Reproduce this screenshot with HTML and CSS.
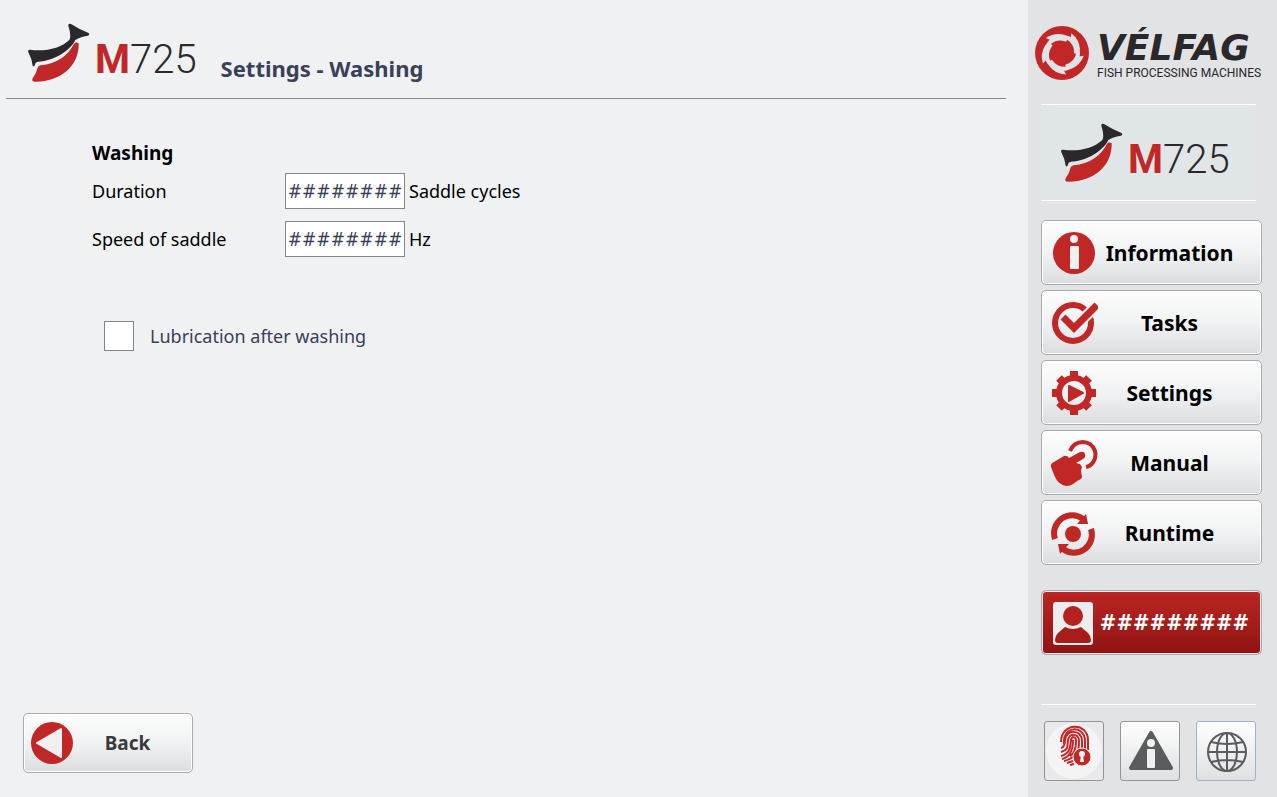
FILE: index.html
```html
<!DOCTYPE html>
<html lang="en">

<head>
    <meta charset="UTF-8">
    <meta name="viewport" content="width=device-width, initial-scale=1.0">
    <title>M725 - Settings - Washing</title>
    <link rel="stylesheet" href="styles.css">
</head>

<body>
    <main class="screen">
        <header class="header">
            <div class="brand">
                <svg class="fish" viewBox="84 70 186 180" aria-hidden="true">
                    <g id="fish">
                        <path fill="#2b282b" d="M205 78Q204 70 213 73Q236 88 264 99Q272 104 264 108Q238 112 226 121C207 160 150 186 114 186Q106 187 105 194Q103 204 98 198Q96 178 85 158Q82 150 90 150C135 157 182 146 208 121Q215 108 205 78Z"/>
                        <path fill="#c12726" d="M222 132Q228 125 236 131C238 200 180 248 102 246Q94 244 98 236Q110 220 112 206Q114 198 122 197C170 192 204 168 222 132Z"/>
                    </g>
                </svg>
                <span class="model"><b>M</b>725</span>
            </div>
            <h1 class="title">Settings - Washing</h1>
        </header>

        <form class="settings">
            <h2 class="group">Washing</h2>
            <div class="row">
                <label for="duration">Duration</label>
                <input id="duration" class="value" type="text" value="########">
                <span>Saddle cycles</span>
            </div>
            <div class="row">
                <label for="speed">Speed of saddle</label>
                <input id="speed" class="value" type="text" value="########">
                <span>Hz</span>
            </div>
            <div class="option">
                <input id="lubrication" class="check" type="checkbox">
                <label for="lubrication">Lubrication after washing</label>
            </div>
        </form>

        <button class="btn back" type="button">
            <svg viewBox="0 0 42 42" aria-hidden="true">
                <circle cx="21" cy="21" r="21" fill="#c12726"/>
                <path fill="#f0f0f1" stroke="#f0f0f1" stroke-width="2" stroke-linejoin="round" d="M6 21L30 7V35Z"/>
            </svg>
            <span>Back</span>
        </button>
    </main>

    <aside class="sidebar">
        <div class="company">
            <svg viewBox="-27 -27 54 54" aria-hidden="true">
                <circle r="27" fill="#c12726"/>
                <circle r="18" fill="#e2e3e5"/>
                <circle r="12" fill="#c12726"/>
                <g id="tooth">
                    <path fill="#e2e3e5" d="M-16 -15A22 22 0 0 1 3 -18L-10 -12Z"/>
                    <path fill="#c12726" d="M-11 -9A15 15 0 0 1 2 -12L-8 -6Z"/>
                </g>
                <use href="#tooth" transform="rotate(72)"/>
                <use href="#tooth" transform="rotate(144)"/>
                <use href="#tooth" transform="rotate(216)"/>
                <use href="#tooth" transform="rotate(288)"/>
            </svg>
            <div class="company-name">
                <strong>VÉLFAG</strong>
                <small>FISH PROCESSING MACHINES</small>
            </div>
        </div>

        <div class="brand machine">
            <svg class="fish" viewBox="84 70 186 180" aria-hidden="true"><use href="#fish"/></svg>
            <span class="model"><b>M</b>725</span>
        </div>

        <nav class="menu">
            <button class="btn" type="button">
                <svg viewBox="0 0 48 48" aria-hidden="true">
                    <circle cx="24" cy="24" r="21" fill="#c12726"/>
                    <circle cx="24" cy="10" r="4" fill="#f3f3f4"/>
                    <rect x="20" y="17" width="9" height="23" rx="1" fill="#f0f0f1"/>
                </svg>
                <span>Information</span>
            </button>
            <button class="btn" type="button">
                <svg viewBox="0 0 48 48" fill="none" stroke="#c12726" aria-hidden="true">
                    <circle cx="23" cy="24" r="18" stroke-width="6"/>
                    <path stroke="#f5f5f5" stroke-width="11" d="M26 27L48 5"/>
                    <path stroke-width="7" d="M13 18L24 29L47 6"/>
                </svg>
                <span>Tasks</span>
            </button>
            <button class="btn" type="button">
                <svg viewBox="0 0 48 48" fill="none" stroke="#c12726" aria-hidden="true">
                    <circle cx="24" cy="24" r="15" stroke-width="6"/>
                    <path stroke-width="8" d="M24 2V9M24 39V46M2 24H9M39 24H46M9 9L14 14M34 34L39 39M39 9L34 14M9 39L14 34"/>
                    <path fill="#c12726" stroke-width="2" stroke-linejoin="round" d="M19 17V32L33 24Z"/>
                </svg>
                <span>Settings</span>
            </button>
            <button class="btn" type="button">
                <svg viewBox="0 0 48 48" aria-hidden="true">
                    <path fill="none" stroke="#c12726" stroke-width="4" d="M20 12C25 0 41 0 45 12C47 20 42 27 36 28"/>
                    <path fill="#c12726" d="M1 28Q0 25 4 23L14 17Q17 16 19 19L30 13Q34 12 35 15Q36 18 33 20L26 24L30 25L32 28L31 32L32 38Q32 40 27 42Q22 47 16 47Q9 46 5 38Z"/>
                </svg>
                <span>Manual</span>
            </button>
            <button class="btn" type="button">
                <svg viewBox="0 0 48 48" aria-hidden="true">
                    <circle cx="23" cy="25" r="8" fill="#c12726"/>
                    <g id="arc">
                        <path fill="none" stroke="#c12726" stroke-width="6" d="M5 30A18 18 0 0 1 33 10"/>
                        <path fill="#c12726" d="M36 5L38 15L27 15Z"/>
                    </g>
                    <use href="#arc" transform="rotate(180 23 25)"/>
                </svg>
                <span>Runtime</span>
            </button>
            <button class="btn user" type="button">
                <svg viewBox="0 0 48 48" aria-hidden="true">
                    <rect x="3" y="3" width="40" height="43" rx="3" fill="#ededed"/>
                    <circle cx="23" cy="17" r="10" fill="#b5211f"/>
                    <path fill="#a81c19" d="M15 28Q23 32 31 28L38 34Q41 37 41 41Q41 44 38 44H8Q5 44 5 41Q5 37 8 34Z"/>
                </svg>
                <span>#########</span>
            </button>
        </nav>

        <div class="tools">
            <button class="tool login" type="button" aria-label="Login">
                <svg viewBox="0 0 58 58" fill="none" stroke="#c12726" stroke-width="2" aria-hidden="true">
                    <circle cx="29" cy="29" r="28" fill="#f4f4f5" stroke="none"/>
                    <path d="M16 20C16 0 43 0 43 18V28M19 22C17 3 40 3 40 19V27M16 26Q20 25 20 18C21 7 37 7 37 19V27M16 30C24 28 22 24 23 18C24 11 34 11 34 19Q34 25 33 30M16 34C26 31 25 24 26 18C27 14 31 14 31 19C31 27 29 32 25 34M17 37C25 35 28 29 28 18M19 39Q24 38 28 35M22 41L28 39M25 43L29 42"/>
                    <circle cx="37" cy="35" r="9" fill="#c12726" stroke="#f4f4f4" stroke-width="1"/>
                    <circle cx="37" cy="32" r="3" fill="#f4f4f4" stroke="none"/>
                    <path fill="#f4f4f4" stroke="none" d="M36 33H38L39 40H35Z"/>
                </svg>
            </button>
            <button class="tool" type="button" aria-label="Alarms">
                <svg viewBox="0 0 58 58" aria-hidden="true">
                    <path fill="#5b5c5e" stroke="#5b5c5e" stroke-width="4" stroke-linejoin="round" d="M30 11L50 46H10Z"/>
                    <circle cx="30" cy="21" r="4" fill="#f0f0f1"/>
                    <rect x="26" y="27" width="8" height="19" rx="1" fill="#f0f0f1"/>
                </svg>
            </button>
            <button class="tool language" type="button" aria-label="Language">
                <svg viewBox="0 0 58 58" fill="none" stroke="#5b5c5e" stroke-width="2" aria-hidden="true">
                    <circle cx="30" cy="30" r="19"/>
                    <ellipse cx="30" cy="30" rx="10" ry="19"/>
                    <path d="M30 11V49M11 30H49M14 20Q30 24 46 20M14 40Q30 36 46 40"/>
                </svg>
            </button>
        </div>
    </aside>
</body>

</html>
```

FILE: styles.css
```css
* {
    box-sizing: border-box;
}

body {
    display: flex;
    min-height: 100vh;
    margin: 0;
    background-color: #eff1f3;
    color: #000;
    font-family: "Noto Sans", Tahoma, sans-serif;
    font-size: 18px;
}

h1,
h2 {
    margin: 0;
}

button,
input {
    font-family: inherit;
}

svg {
    display: block;
    flex: none;
}

.screen {
    flex: 1;
    display: flex;
    flex-direction: column;
    padding: 0 22px 24px 6px;
}

.header {
    display: flex;
    align-items: center;
    gap: 24px;
    height: 99px;
    padding: 8px 0 0 22px;
    border-bottom: 1px solid #85868b;
}

.brand {
    display: flex;
    align-items: center;
    gap: 5px;
}

.fish {
    width: 62px;
    height: 60px;
}

.model {
    padding-top: 14px;
    color: #2b282b;
    font-family: Roboto, "Liberation Sans", sans-serif;
    font-size: 40px;
    font-weight: 300;
    line-height: 46px;
}

.model b {
    color: #c12726;
    font-weight: bold;
}

.title {
    padding-top: 30px;
    color: #3a3f5a;
    font-size: 22px;
    line-height: 28px;
}

.settings {
    padding: 40px 0 0 86px;
}

.group {
    font-size: 19px;
    line-height: 28px;
}

.row {
    display: grid;
    grid-template-columns: 189px 120px auto;
    column-gap: 4px;
    align-items: center;
    margin: 6px 0 12px;
}

.value {
    width: 120px;
    height: 36px;
    padding: 0;
    border: 1px solid #85868b;
    background: #fff;
    color: #3a3f5a;
    font-family: "DejaVu Sans Condensed", "DejaVu Sans", sans-serif;
    font-size: 19px;
    text-align: center;
}

.option {
    display: flex;
    align-items: center;
    gap: 16px;
    margin-top: 64px;
    padding-left: 12px;
    color: #3a3f5a;
}

.check {
    appearance: none;
    width: 30px;
    height: 30px;
    margin: 0;
    border: 1px solid #85868b;
    background: #fff;
}

.check:checked {
    background: #c12726;
}

.btn {
    display: flex;
    align-items: center;
    width: 100%;
    height: 65px;
    padding: 0 20px 0 8px;
    border: 1px solid #a9abae;
    border-radius: 5px;
    background: linear-gradient(#fdfdfd, #f1f2f3 50%, #dcdddf);
    box-shadow: inset 0 0 0 1px #fff;
    color: #000;
    font-size: 21px;
    font-weight: bold;
    cursor: pointer;
}

.btn svg {
    width: 48px;
    height: 48px;
}

.btn span {
    flex: 1;
    text-align: center;
}

.back {
    width: 170px;
    height: 60px;
    margin: auto 0 0 17px;
    padding: 0 10px 0 7px;
    color: #3a3a3c;
    font-size: 19px;
}

.back svg {
    width: 42px;
    height: 42px;
}

.sidebar {
    display: flex;
    flex-direction: column;
    width: 249px;
    padding: 0 15px 16px 13px;
    background-color: #e2e3e5;
}

.company {
    display: flex;
    align-items: center;
    gap: 8px;
    height: 104px;
    margin: 0 -14px 0 -6px;
    padding-top: 2px;
}

.company svg {
    width: 54px;
    height: 54px;
}

.company-name {
    padding-top: 6px;
    color: #2b282b;
    font-family: "DejaVu Sans", sans-serif;
    white-space: nowrap;
}

.company-name strong {
    display: block;
    font-size: 36px;
    font-style: italic;
    line-height: 34px;
}

.company-name small {
    display: block;
    font-family: Roboto, "Liberation Sans", sans-serif;
    font-size: 12px;
    line-height: 16px;
}

.machine {
    height: 97px;
    margin-right: 6px;
    padding-left: 20px;
    border: solid #fff;
    border-width: 1px 0;
    background-color: #e0e5e8;
}

.menu {
    display: flex;
    flex-direction: column;
    gap: 5px;
    padding-top: 19px;
}

.user {
    margin-top: 20px;
    padding-right: 10px;
    background: linear-gradient(#bb2624, #8f1412);
    box-shadow: inset 0 0 0 1px #f4eeee;
    color: #fff;
    font-family: "DejaVu Sans Condensed", "DejaVu Sans", sans-serif;
    font-size: 22px;
}

.tools {
    display: flex;
    gap: 16px;
    margin: auto 6px 0 0;
    padding: 16px 0 0 3px;
    border-top: 1px solid #fff;
}

.tool {
    width: 60px;
    height: 60px;
    padding: 0;
    border: 1px solid #929497;
    border-radius: 3px;
    background: linear-gradient(#fff, #dfe0e2);
    cursor: pointer;
}

.login {
    background: #e9e9eb;
}

.language {
    border-color: #9fb0cb;
}
```
